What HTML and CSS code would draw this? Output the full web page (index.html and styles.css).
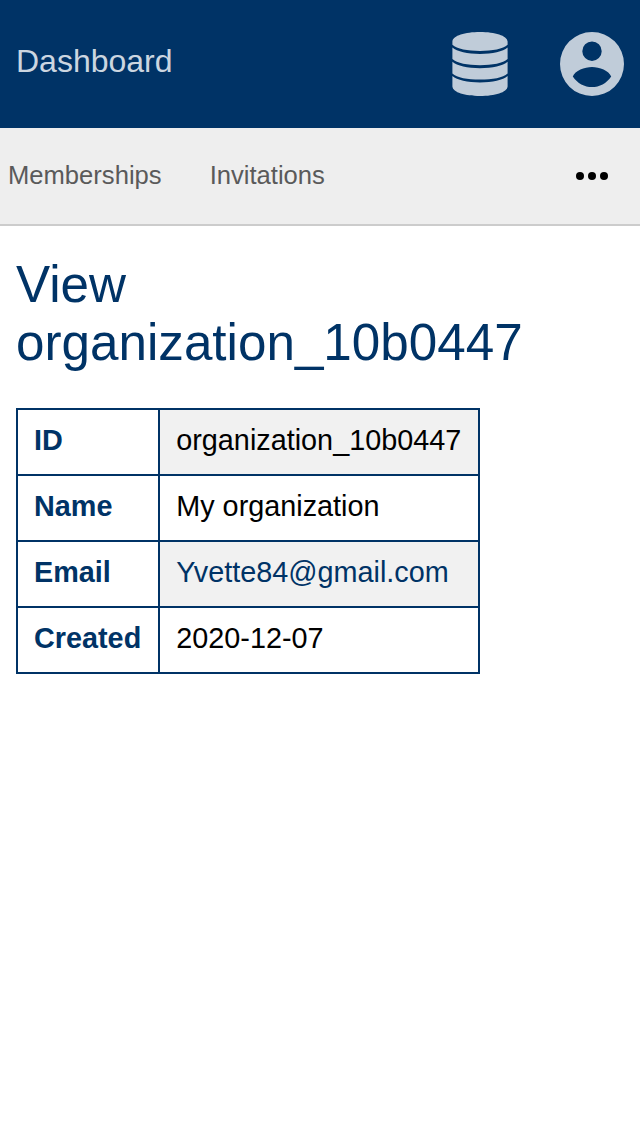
FILE: index.html
```html
<!DOCTYPE html>
<html lang="en">
<head>
<meta charset="utf-8">
<title>Dashboard</title>
<link rel="stylesheet" href="styles.css">
</head>
<body>
<header class="header">
  <a class="brand">Dashboard</a>
  <div class="actions">
    <svg class="icon" viewBox="0 0 64 64"><path d="M4.400 9.500C5 3.500 17 0 32 0s27 3.500 27.600 9.500v3.300C55 16.900 44.500 19 32 19S9 16.900 4.400 12.800zM4.400 15.500C9 19.600 19.500 21.900 32 21.900s23-2.300 27.600-6.400v11.600C55 31.200 44.500 33.300 32 33.300S9 31.200 4.400 27.100zM4.400 29.800C9 33.900 19.500 36.200 32 36.200s23-2.300 27.600-6.400v11.600C55 45.500 44.500 47.600 32 47.600S9 45.500 4.400 41.400zM4.400 44.100C9 48.200 19.500 50.500 32 50.500s23-2.300 27.600-6.400v10.400C59 60.500 47 64 32 64S5 60.500 4.400 54.500z"/></svg>
    <svg class="icon" viewBox="0 0 64 64"><path fill-rule="evenodd" d="M32 0a32 32 0 1 0 0 64 32 32 0 0 0 0-64zM32 9.500a9.700 9.700 0 1 1 0 19.400 9.700 9.700 0 0 1 0-19.400zM12.800 44.400C15 38.500 24.500 34.900 32 34.900s17 3.600 19.200 9.500C46.500 51.300 39.500 55 32 55s-14.500-3.700-19.200-10.600z"/></svg>
  </div>
</header>
<nav class="nav">
  <a class="tab">Memberships</a>
  <a class="tab">Invitations</a>
  <svg class="more" viewBox="0 0 32 8"><circle cx="4" cy="4" r="4"/><circle cx="16" cy="4" r="4"/><circle cx="28" cy="4" r="4"/></svg>
</nav>
<main class="content">
  <h1 class="title">View organization_10b0447</h1>
  <table class="details">
    <tr><th>ID</th><td>organization_10b0447</td></tr>
    <tr><th>Name</th><td>My organization</td></tr>
    <tr><th>Email</th><td><a class="link">Yvette84@gmail.com</a></td></tr>
    <tr><th>Created</th><td>2020-12-07</td></tr>
  </table>
</main>
</body>
</html>
```
FILE: styles.css
```css
body { margin: 0; background: #fff; color: #000; font-family: "Liberation Sans", Arial, sans-serif; }
.header { box-sizing: border-box; height: 128px; padding: 32px 16px; display: flex; justify-content: space-between; background: #036; color: #ccd6e0; }
.brand { font-size: 32px; line-height: 58px; }
.actions { display: flex; gap: 48px; }
.icon { width: 64px; height: 64px; fill: #c0ccd9; }
.nav { box-sizing: border-box; height: 98px; padding: 0 32px 0 8px; display: flex; align-items: center; gap: 48px; background: #eee; border-bottom: 2px solid #ccc; color: #5a5a5a; font-size: 25.6px; }
.tab { padding-bottom: 2px; }
.more { width: 32px; height: 8px; margin-left: auto; fill: #000; }
.content { padding: 30px 16px; }
.title { margin: 0 0 36px; color: #036; font-size: 51.2px; line-height: 58px; font-weight: 400; }
.details { border-collapse: collapse; font-size: 28.8px; line-height: 32px; }
.details th, .details td { border: 2px solid #036; padding: 14px 17px 18px 16px; text-align: left; }
.details th { color: #036; }
.details tr:nth-child(odd) td { background: #f1f1f1; }
.link { color: #036; }
```
